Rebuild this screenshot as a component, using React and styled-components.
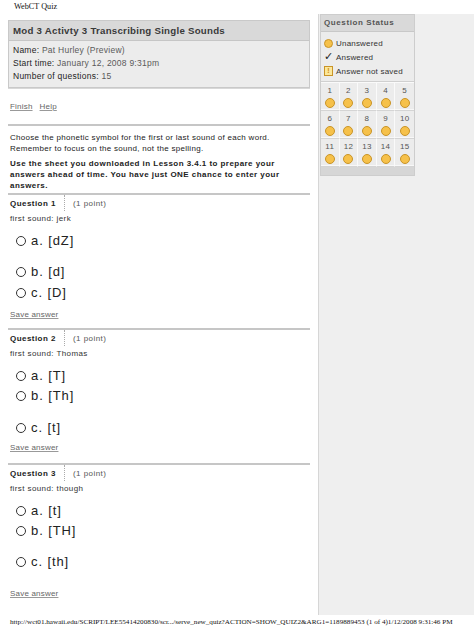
import React from "react";
import styled, { createGlobalStyle } from "styled-components";

const Global = createGlobalStyle`
  html, body { margin: 0; padding: 0; background: #ffffff; }
  body { font-family: "Liberation Sans", Arial, sans-serif; color: #222; }
`;

const Page = styled.div`
  width: 474px;
  height: 630px;
  overflow: hidden;
  background: #fff;
  display: flex;
  flex-direction: column;
`;

const TopTitle = styled.div`
  height: 14px;
  line-height: 14px;
  padding-left: 14px;
  font-family: "Liberation Serif", "Times New Roman", serif;
  font-size: 8.2px;
  color: #111;
`;

const Main = styled.div`
  display: flex;
  height: 601px;
`;

const LeftCol = styled.div`
  width: 302px;
  margin-left: 8px;
  padding-top: 6px;
  display: flex;
  flex-direction: column;
`;

const RightCol = styled.div`
  flex: 1;
  margin-left: 8px;
  background: #efefef;
  border-left: 1px solid #d6d6d6;
  padding-left: 1px;
`;

const HeaderBox = styled.div`
  width: 300px;
  border: 1px solid #c9c9c9;
  background: #ececec;
  box-shadow: 0 1px 0 #d8d8d8;
`;

const HeaderTitle = styled.div`
  height: 19px;
  line-height: 19px;
  padding-left: 4px;
  background: #d9d9d9;
  border-bottom: 1px solid #c6c6c6;
  font-weight: bold;
  font-size: 9.7px;
  letter-spacing: 0.25px;
  color: #3a3a3a;
`;

const InfoList = styled.div`
  padding: 3px 4px 4px;
`;

const InfoRow = styled.div`
  line-height: 13px;
  font-size: 8.5px;
  letter-spacing: 0.25px;
  color: #5a5a5a;
`;

const InfoLabel = styled.span`
  color: #1e1e1e;
`;

const Links = styled.div`
  margin-top: 13px;
  line-height: 12px;
  padding-left: 2px;
  display: flex;
  gap: 7px;
`;

const TextLink = styled.a`
  font-size: 8px;
  letter-spacing: 0.2px;
  color: #666;
  text-decoration: underline;
  text-decoration-color: #999;
  cursor: pointer;
`;

const Rule = styled.div`
  height: 2px;
  background: #c6c6c6;
  margin-top: ${(p) => p.$top || 0}px;
  width: 302px;
`;

const Instructions = styled.div`
  padding: 5.5px 2px 2.5px;
`;

const Para = styled.p`
  margin: 0 0 ${(p) => p.$bottom || 0}px;
  font-size: 8px;
  line-height: 11px;
  letter-spacing: ${(p) => (p.$bold ? "0.45px" : "0.3px")};
  font-weight: ${(p) => (p.$bold ? "bold" : "normal")};
  color: #222;
`;

const QuestionBlock = styled.div`
  padding: 0 2px;
`;

const QuestionHead = styled.div`
  display: flex;
  align-items: center;
  height: 16px;
  font-size: 8px;
  letter-spacing: 0.45px;
`;

const QuestionNo = styled.span`
  font-weight: bold;
  color: #222;
  width: 54px;
`;

const DotSep = styled.span`
  height: 16px;
  border-left: 1px dotted #aaa;
  margin-right: 8px;
`;

const Points = styled.span`
  color: #555;
`;

const Prompt = styled.div`
  font-size: 8px;
  letter-spacing: 0.4px;
  color: #333;
  line-height: 12px;
  margin-top: 2px;
`;

const Option = styled.label`
  display: flex;
  align-items: center;
  height: 20px;
  margin-top: ${(p) => p.$top}px;
  padding-left: 6px;
  font-size: 13px;
  letter-spacing: 0.9px;
  color: #222;
`;

const Radio = styled.span`
  width: 8px;
  height: 8px;
  border: 1.4px solid #333;
  border-radius: 50%;
  margin-right: 5px;
  margin-top: 2px;
  background: #fff;
`;

const SaveLink = styled(TextLink)`
  display: block;
  line-height: 12px;
  margin-top: ${(p) => p.$top}px;
`;

const StatusPanel = styled.div`
  width: 93px;
  border: 1px solid #cdcdcd;
  background: #ececec;
`;

const StatusTitle = styled.div`
  height: 16px;
  line-height: 16px;
  padding-left: 3px;
  background: #d9d9d9;
  border-bottom: 1px solid #c8c8c8;
  font-weight: bold;
  font-size: 8px;
  letter-spacing: 0.6px;
  color: #555;
`;

const Legend = styled.div`
  padding: 4px 3px 3px;
  border-bottom: 1px solid #d0d0d0;
`;

const LegendRow = styled.div`
  display: flex;
  align-items: center;
  height: 14px;
  font-size: 8px;
  letter-spacing: 0.2px;
  color: #333;
`;

const IconSlot = styled.span`
  width: 12px;
  display: flex;
  align-items: center;
`;

const Dot = styled.span`
  display: inline-block;
  width: 7px;
  height: 7px;
  border-radius: 50%;
  background: #f6c14a;
  border: 1px solid #c99428;
`;

const Check = styled.span`
  font-size: 11px;
  color: #222;
  line-height: 10px;
  font-family: "DejaVu Sans", sans-serif;
`;

const WarnBox = styled.span`
  width: 7px;
  height: 8px;
  border: 1px solid #c99428;
  background: #fbe79a;
  color: #d08a10;
  font-size: 7px;
  font-weight: bold;
  line-height: 8px;
  text-align: center;
`;

const Grid = styled.div`
  display: grid;
  grid-template-columns: repeat(5, 1fr);
  border-top: 1px solid #fafafa;
`;

const Cell = styled.div`
  height: 28px;
  display: flex;
  flex-direction: column;
  align-items: center;
  padding-top: 3px;
  box-sizing: border-box;
  border-right: ${(p) => (p.$last ? "none" : "1px solid #fafafa")};
  border-bottom: 1px solid #d4d4d4;
  box-shadow: inset 0 -1px 0 #f8f8f8;
  font-size: 8px;
  color: #555;
  letter-spacing: 0.3px;
  line-height: 10px;
`;

const CellDot = styled(Dot)`
  margin-top: 2px;
  width: 8px;
  height: 8px;
`;

const PanelFoot = styled.div`
  height: 8px;
  background: #d6d6d6;
`;

const Footer = styled.div`
  height: 15px;
  line-height: 14px;
  padding-left: 10px;
  font-family: "Liberation Serif", "Times New Roman", serif;
  font-size: 7.15px;
  color: #111;
  white-space: nowrap;
`;

const questions = [
  {
    no: 1,
    prompt: "first sound: jerk",
    options: [
      ["a.", "[dZ]", 5],
      ["b.", "[d]", 11],
      ["c.", "[D]", 1],
    ],
    save: 7,
    rule: 0,
  },
  {
    no: 2,
    prompt: "first sound: Thomas",
    options: [
      ["a.", "[T]", 5],
      ["b.", "[Th]", 0],
      ["c.", "[t]", 12],
    ],
    save: 5,
    rule: 7,
  },
  {
    no: 3,
    prompt: "first sound: though",
    options: [
      ["a.", "[t]", 5],
      ["b.", "[TH]", 0],
      ["c.", "[th]", 11],
    ],
    save: 17,
    rule: 9,
  },
];

export default function App() {
  return (
    <>
      <Global />
      <Page>
        <TopTitle>WebCT Quiz</TopTitle>
        <Main>
          <LeftCol>
            <HeaderBox>
              <HeaderTitle>Mod 3 Activty 3 Transcribing Single Sounds</HeaderTitle>
              <InfoList>
                <InfoRow>
                  <InfoLabel>Name:</InfoLabel> Pat Hurley (Preview)
                </InfoRow>
                <InfoRow>
                  <InfoLabel>Start time:</InfoLabel> January 12, 2008 9:31pm
                </InfoRow>
                <InfoRow>
                  <InfoLabel>Number of questions:</InfoLabel> 15
                </InfoRow>
              </InfoList>
            </HeaderBox>
            <Links>
              <TextLink>Finish</TextLink>
              <TextLink>Help</TextLink>
            </Links>
            <Rule $top={11} />
            <Instructions>
              <Para $bottom={4}>
                Choose the phonetic symbol for the first or last sound of each word.
                <br />
                Remember to focus on the sound, not the spelling.
              </Para>
              <Para $bold>
                Use the sheet you downloaded in Lesson 3.4.1 to prepare your answers
                ahead of time. You have just ONE chance to enter your answers.
              </Para>
            </Instructions>
            {questions.map((q) => (
              <React.Fragment key={q.no}>
                <Rule $top={q.rule} />
                <QuestionBlock>
                  <QuestionHead>
                    <QuestionNo>Question {q.no}</QuestionNo>
                    <DotSep />
                    <Points>(1 point)</Points>
                  </QuestionHead>
                  <Prompt>{q.prompt}</Prompt>
                  {q.options.map(([l, v, top]) => (
                    <Option key={l} $top={top}>
                      <Radio />
                      {l} {v}
                    </Option>
                  ))}
                  <SaveLink $top={q.save}>Save answer</SaveLink>
                </QuestionBlock>
              </React.Fragment>
            ))}
          </LeftCol>
          <RightCol>
            <StatusPanel>
              <StatusTitle>Question Status</StatusTitle>
              <Legend>
                <LegendRow>
                  <IconSlot>
                    <Dot />
                  </IconSlot>
                  Unanswered
                </LegendRow>
                <LegendRow>
                  <IconSlot>
                    <Check>✓</Check>
                  </IconSlot>
                  Answered
                </LegendRow>
                <LegendRow>
                  <IconSlot>
                    <WarnBox>!</WarnBox>
                  </IconSlot>
                  Answer not saved
                </LegendRow>
              </Legend>
              <Grid>
                {Array.from({ length: 15 }, (_, k) => (
                  <Cell key={k} $last={k % 5 === 4}>
                    {k + 1}
                    <CellDot />
                  </Cell>
                ))}
              </Grid>
              <PanelFoot />
            </StatusPanel>
          </RightCol>
        </Main>
        <Footer>
          http://wct01.hawaii.edu/SCRIPT/LEE55414200830/scr.../serve_new_quiz?ACTION=SHOW_QUIZ2&amp;ARG1=1189889453 (1 of 4)1/12/2008 9:31:46 PM
        </Footer>
      </Page>
    </>
  );
}
